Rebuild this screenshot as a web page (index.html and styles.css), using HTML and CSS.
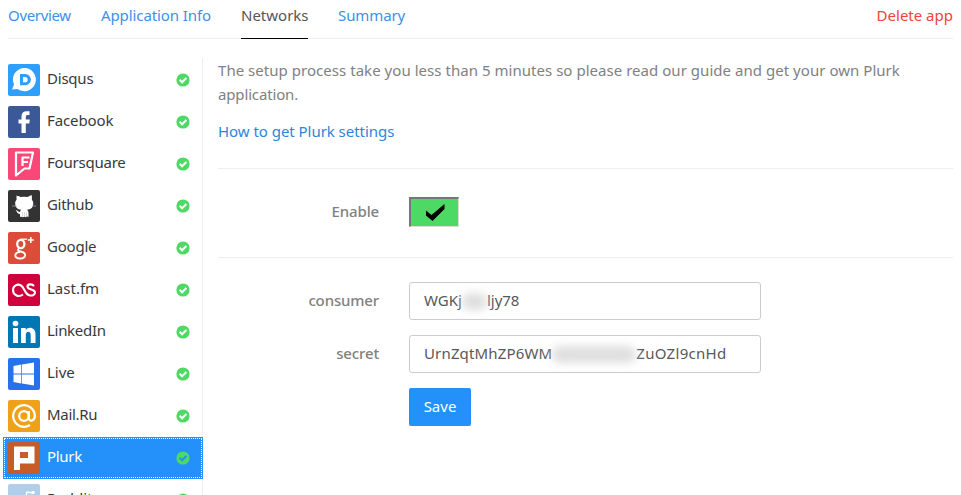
FILE: index.html
```
<!DOCTYPE html>
<html lang="en">
<head>
<meta charset="utf-8">
<title>Networks</title>
<link rel="stylesheet" href="styles.css">
</head>
<body>
<svg width="0" height="0" class="defs"><symbol id="ok" viewBox="0 0 14 14"><circle cx="7" cy="7" r="6.6" fill="#4cd964"/><path d="M3.600 6.800l2.500 2.500 4.300-4.300" fill="none" stroke="currentColor" stroke-width="2"/></symbol></svg>
<nav class="tabs">
  <a class="t-overview">Overview</a><a class="t-info">Application Info</a><a class="t-networks active">Networks</a><a class="t-summary">Summary</a><a class="delete">Delete app</a>
</nav>
<div class="layout">
  <ul class="networks">
    <li><svg class="logo" viewBox="0 0 32 32"><rect width="32" height="32" rx="2" fill="#2e9fff"/><path d="M16.500 4A11.600 11.600 0 1 1 9.500 25L4 25.500l2-5A11.600 11.600 0 0 1 16.500 4z" fill="#fff"/><path fill-rule="evenodd" d="M12 10h5.300a5.600 5.600 0 0 1 0 11.200H12zM15 13v5.300h2a2.650 2.650 0 0 0 0-5.300z" fill="#2e9fff"/></svg><span class="n1">Disqus</span><svg class="ok"><use href="#ok"/></svg></li>
    <li><svg class="logo" viewBox="0 0 32 32"><rect width="32" height="32" rx="2" fill="#3b5998"/><path d="M13.500 27V17.500h-3v-4h3v-3c0-3.500 2-5.300 5.200-5.300H21.500v3.800h-1.700c-1.600 0-2 .7-2 2v2.500h4l-.5 4h-3.500V27z" fill="#fff"/></svg><span class="n2">Facebook</span><svg class="ok"><use href="#ok"/></svg></li>
    <li><svg class="logo" viewBox="0 0 32 32"><rect width="32" height="32" rx="2" fill="#f94877"/><path d="M8 4.500H25L21.500 20.500H16.500L8 27.500zM21.500 9.500H14.500V18M20 14H14.500" fill="none" stroke="#fff" stroke-width="2.200" stroke-linejoin="round"/></svg><span class="n3">Foursquare</span><svg class="ok"><use href="#ok"/></svg></li>
    <li><svg class="logo" viewBox="0 0 32 32"><rect width="32" height="32" rx="2" fill="#333"/><path d="M8.500 5l4 2q3.500-.7 7 0l4-2q1 2.500.3 4.500 1.700 2 1.400 4.500c-.3 4-2.500 5.300-6.200 5.700q1.500 1 1.500 3v4.300l-2-.8v1l-2-.5-1.500.5-2-.5-1 .2V24c-3 0-3-3-4.500-4 2 0 2.500 2 4.500 2q.2-1.600 1.200-2.300c-3.700-.4-5.700-2-6-5.700q-.3-2.500 1.400-4.500-.7-2 .4-4.500z" fill="#fff"/><path d="M4 16h5M24 16h4" stroke="#aaa" stroke-width=".7"/><path d="M14.500 22v5M16.500 22v5M18.500 22v5" stroke="#aaa" stroke-width=".4"/></svg><span class="n4">Github</span><svg class="ok"><use href="#ok"/></svg></li>
    <li><svg class="logo" viewBox="0 0 32 32"><rect width="32" height="32" rx="2" fill="#dd4b39"/><g fill="none" stroke="#fff"><ellipse cx="12.800" cy="12" rx="3.600" ry="4.200" stroke-width="2.300"/><path d="M12.500 7.200H19" stroke-width="1.300"/><path d="M11.500 16c-2.500 1.500-1.500 3 1 3.500 3 .7 5 1.500 4.600 4C16 28 7 27 7.300 23.500c0-2 2.200-3.200 4.700-3.500" stroke-width="1.900"/><path d="M22.800 5v6M19.800 8h6" stroke-width="1.500"/></g></svg><span class="n5">Google</span><svg class="ok"><use href="#ok"/></svg></li>
    <li><svg class="logo" viewBox="0 0 32 32"><rect width="32" height="32" rx="2" fill="#d0003c"/><path d="M15 20.500C10 24 5 20.500 5 16s4.500-6.500 8-4.500c3.500 2 4 9.500 9 10 3 .3 5-1 5-3 0-4-7.500-2-7.500-6 0-2.500 4.500-3 6.500-.3" fill="none" stroke="#fff" stroke-width="2.100"/></svg><span class="n6">Last.fm</span><svg class="ok"><use href="#ok"/></svg></li>
    <li><svg class="logo" viewBox="0 0 32 32"><rect width="32" height="32" rx="2" fill="#0077b5"/><g fill="#fff"><circle cx="7.500" cy="7.500" r="2.800"/><path d="M5 12h5v15H5zM13 12h4.700v2c3-4 9.800-2.600 9.800 4V27h-4.800v-8c0-4.500-4.900-4-4.900 0v8H13z"/></g></svg><span class="n7">LinkedIn</span><svg class="ok"><use href="#ok"/></svg></li>
    <li><svg class="logo" viewBox="0 0 32 32"><rect width="32" height="32" rx="2" fill="#2672ec"/><path d="M5.500 8l7.800-1.500V15.500H5.500zM14 6.400L26 4.500v11H14zM5.500 16.500h7.800v9L5.500 24zM14 16.500h12v11l-12-1.900z" fill="#fff"/></svg><span class="n8">Live</span><svg class="ok"><use href="#ok"/></svg></li>
    <li><svg class="logo" viewBox="0 0 32 32"><rect width="32" height="32" rx="2" fill="#f0a11a"/><g fill="none" stroke="#fff" stroke-width="2.300"><circle cx="16" cy="16" r="4.800"/><path d="M20.800 11v7c0 4 6 3.500 6-2A10.800 10.800 0 1 0 22 25"/></g></svg><span class="n9">Mail.Ru</span><svg class="ok"><use href="#ok"/></svg></li>
    <li class="selected"><svg class="logo" viewBox="0 0 32 32"><rect width="32" height="32" rx="2" fill="#c65c27"/><path fill-rule="evenodd" d="M6 4.500h20.500v17H12V28H6zM12 10v6h8v-6z" fill="#fff"/></svg><span class="n10">Plurk</span><svg class="ok"><use href="#ok"/></svg></li>
    <li><svg class="logo" viewBox="0 0 32 32"><rect width="32" height="32" rx="2" fill="#b1cde8"/><path d="M17 16l2-8 6 1" fill="none" stroke="#fff" stroke-width="1.500"/><circle cx="25" cy="8.500" r="1.800" fill="#fff"/></svg><span class="n11">Reddit</span><svg class="ok"><use href="#ok"/></svg></li>
  </ul>
  <main>
    <p class="intro"><span class="i1">The setup process take you less than 5 minutes so please read our guide and get your own Plurk</span><br><span class="i2">application.</span></p>
    <p class="guide"><a>How to get Plurk settings</a></p>
    <div class="row enable"><label class="l1">Enable</label><button class="check"><svg viewBox="0 0 20 18" width="20" height="18"><path d="M1 6.500l5.500 4.500L19.500 0v5L7.500 17 1 11.500z"/></svg></button></div>
    <div class="row"><label class="l2">consumer</label><div class="field"><span class="v1">WGKj</span><i class="mask m1"></i><span class="v2">ljy78</span></div></div>
    <div class="row"><label class="l3">secret</label><div class="field"><span class="v3">UrnZqtMhZP6WM</span><i class="mask m2"></i><span class="v4">ZuOZl9cnHd</span></div></div>
    <button class="save">Save</button>
  </main>
</div>
</body>
</html>
```
FILE: styles.css
```
*{box-sizing:border-box}
body{margin:0;width:961px;height:495px;overflow:hidden;background:#fff;font:15px/24px "Noto Sans",sans-serif;color:#373a3c}
.defs{display:block;height:0}
.tabs{display:flex;margin:0 8px;height:39px;border-bottom:1px solid #eceeef;color:#3a91ec;padding-top:3px}
.tabs a{height:36px;white-space:nowrap}
.t-overview{width:93px;letter-spacing:-.33px}
.t-info{width:140px;letter-spacing:-.1px}
.t-networks{width:67px;margin-right:30px}
.t-summary{letter-spacing:-.1px}
.tabs .active{color:#555;border-bottom:1px solid #000}
.tabs .delete{margin:0 0 0 auto;color:#ee4340}
.layout{display:flex;padding-top:19px;height:456px;overflow:hidden}
.networks{list-style:none;margin:0;padding:1px 0 0 3px;width:203px;height:437px;overflow:hidden;box-shadow:inset -1px 0 #eee;flex:none}
.networks li{display:flex;align-items:center;height:42px;width:200px;padding:0 13px 0 5px;color:#fff}
.networks span{color:#373a3c;margin:-5px 0 0 7px}
.n1,.n3,.n5{letter-spacing:-.22px}
.n2{letter-spacing:-.1px}
.n7,.n9{letter-spacing:-.3px}
.n4,.n10{letter-spacing:-.3px}
.logo{width:32px;height:32px;flex:none}
.ok{width:14px;height:14px;margin-left:auto}
.networks .selected{background:#2490f9;color:#2490f9;outline:1px dotted #fff;outline-offset:-2px}
.networks .selected span{color:#fff}
main{margin-left:15px;width:735px;color:#818181}
p{margin:0;white-space:nowrap}
.i1{letter-spacing:.037px}
.i2{letter-spacing:-.15px}
.guide{margin-top:13px;height:49px}
.guide a{color:#2e85d8;letter-spacing:-.04px}
.row{display:flex;height:38px;align-items:center;margin-bottom:15px}
.row label{width:161px;text-align:right;margin-right:30px;font-weight:500;letter-spacing:-.15px}
.row label,.field span{margin-top:-2px}
.enable{height:90px;border:solid #eceeef;border-width:1px 0;margin-bottom:24px}
.enable label{margin-top:-4px}
.check{width:50px;height:30px;margin-top:-2px;border:solid;border-width:2px 1px 1px 2px;border-color:#777 #dedede #dedede #777;background:#4cd964;padding:0;display:flex;align-items:center;justify-content:center}
.field{display:flex;align-items:center;width:352px;height:38px;border:1px solid #ccc;border-radius:3px;padding:0 14px;color:#55595c}
.mask{height:17px;background:#dfdfdf;border-radius:8px;filter:blur(4px)}
.m1{width:25px}
.m2{width:84px}
.v3{letter-spacing:.15px}
.v4{letter-spacing:.3px}
.save{display:block;width:62px;height:38px;margin-left:191px;padding:0 0 2px;border:0;border-radius:2px;background:#2490f9;color:#fff;font:15px "Noto Sans",sans-serif}
```
